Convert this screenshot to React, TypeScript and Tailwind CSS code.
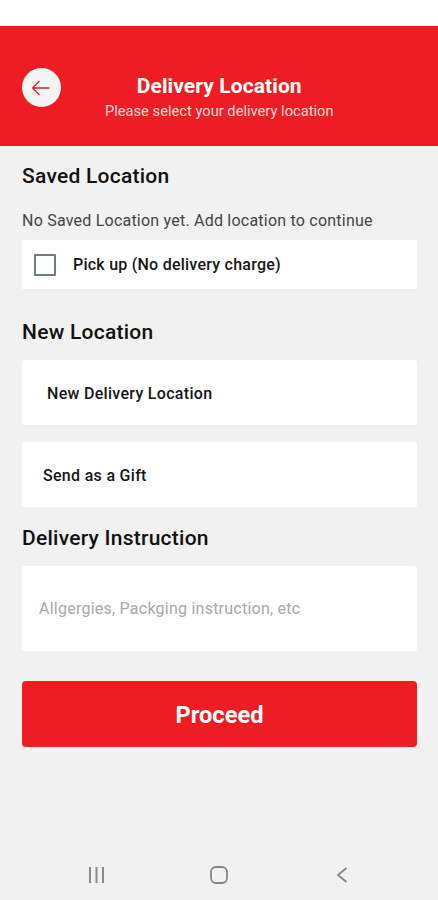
import { useState } from "react";

interface LocationOptionProps {
  label: string;
  className?: string;
}

function SectionTitle({ children }: { children: string }) {
  return (
    <h2 className="text-[21px] leading-7 font-medium tracking-[0.25px] whitespace-nowrap text-[#111]">
      {children}
    </h2>
  );
}

function LocationOption({ label, className = "" }: LocationOptionProps) {
  return (
    <button
      type="button"
      className={`flex h-[65px] w-full items-center rounded-[3px] bg-white pt-0.5 text-left text-[16px] font-medium tracking-[0.3px] whitespace-nowrap text-[#161616] ${className}`}
    >
      {label}
    </button>
  );
}

function Header() {
  return (
    <header className="flex h-[120px] items-start bg-[#ee1d23] pl-[21.5px]">
      <button
        type="button"
        aria-label="Go back"
        className="mt-[42px] flex size-[39px] shrink-0 items-center justify-center rounded-full bg-[#f4f4f4]"
      >
        <svg width="20" height="16" viewBox="0 0 20 16" fill="none" stroke="#d9222c" strokeWidth="1.3">
          <path d="M18.5 8H1.500M8.500 1L1.500 8l7 7" />
        </svg>
      </button>
      <div className="mt-[48px] mr-[60px] flex-1 text-center whitespace-nowrap text-white">
        <h1 className="text-[21px] leading-6 font-bold tracking-[0.1px]">Delivery Location</h1>
        <p className="text-[14.7px] leading-[26px] text-[#ffd9da]">
          Please select your delivery location
        </p>
      </div>
    </header>
  );
}

// Android system navigation: recents, home, back
function NavigationBar() {
  return (
    <nav className="flex h-[51px] shrink-0 items-center justify-between pr-[89px] pl-[87px]">
      <svg width="18" height="16" viewBox="0 0 18 16" stroke="#8a8a8a" strokeWidth="2">
        <path d="M3 0v16M9.5 0v16M16 0v16" />
      </svg>
      <svg className="-ml-[3px]" width="18" height="18" viewBox="0 0 18 18" fill="none" stroke="#858585" strokeWidth="1.8">
        <rect x="1" y="1" width="16" height="16" rx="5" />
      </svg>
      <svg width="14" height="16" viewBox="0 0 14 16" fill="none" stroke="#858585" strokeWidth="1.8">
        <path d="M11.5 1L3 8l8.500 7" />
      </svg>
    </nav>
  );
}

export default function App() {
  const [pickUp, setPickUp] = useState(false);

  return (
    <div className="flex h-[900px] w-full flex-col bg-[#f1f1f1] pt-[26px] font-['Roboto',sans-serif] shadow-[inset_0_26px_0_#fff]">
      <Header />

      <main className="flex flex-1 flex-col pt-4 pr-[21px] pl-[22px]">
        <SectionTitle>Saved Location</SectionTitle>
        <p className="mt-[21px] text-[16px] leading-5 tracking-[0.22px] whitespace-nowrap text-[#444]">
          No Saved Location yet. Add location to continue
        </p>
        <label className="mt-[9px] flex h-[49px] items-center bg-white pl-3">
          <input
            type="checkbox"
            checked={pickUp}
            onChange={(e) => setPickUp(e.target.checked)}
            className="size-[22px] appearance-none rounded-[1px] border-2 border-[#6b7d87] checked:bg-[#6b7d87]"
          />
          <span className="ml-[17px] pt-px text-[16px] font-medium tracking-[0.24px] whitespace-nowrap text-[#161616]">
            Pick up (No delivery charge)
          </span>
        </label>

        <div className="mt-[29px] mb-[14px]">
          <SectionTitle>New Location</SectionTitle>
        </div>
        <LocationOption label="New Delivery Location" className="pl-[25px]" />
        <LocationOption label="Send as a Gift" className="mt-[17px] pl-[21px]" />

        <div className="mt-[17px] mb-[14px]">
          <SectionTitle>Delivery Instruction</SectionTitle>
        </div>
        <input
          type="text"
          placeholder="Allgergies, Packging instruction, etc"
          className="h-[85px] w-full rounded-[3px] bg-white px-[17px] text-[16px] tracking-[0.24px] placeholder-[#a9a9a9] focus:outline-none"
        />

        <button
          type="button"
          className="mt-[30px] h-[66px] w-full rounded-[4px] bg-[#ee1d23] pt-1 text-[23.6px] font-bold text-white"
        >
          Proceed
        </button>
      </main>

      <NavigationBar />
    </div>
  );
}
